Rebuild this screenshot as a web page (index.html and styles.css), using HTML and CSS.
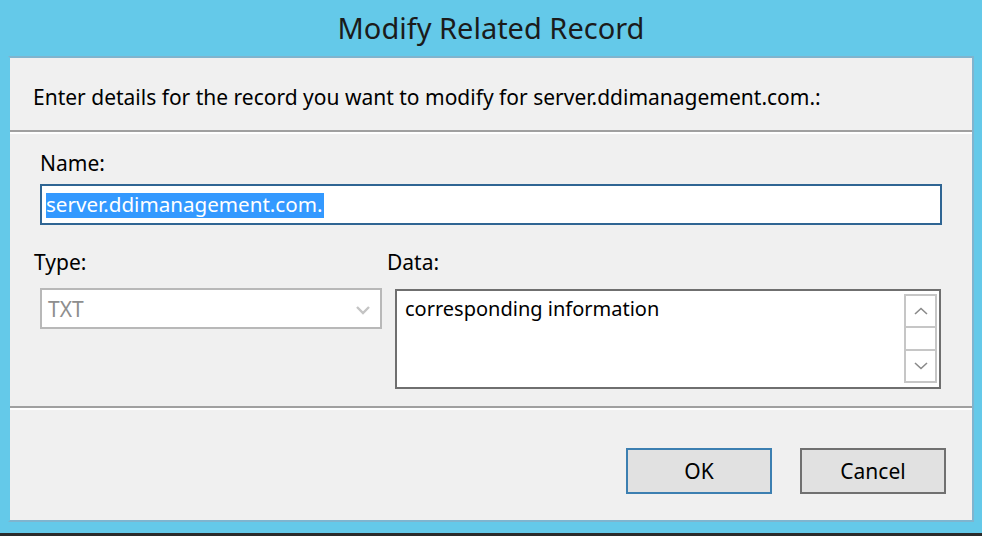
FILE: index.html
```html
<!DOCTYPE html>
<html>
<head>
<meta charset="utf-8">
<link rel="stylesheet" href="styles.css">
</head>
<body>
<div class="window">
  <div class="titlebar">Modify Related Record</div>
  <div class="client">
    <div class="intro">Enter details for the record you want to modify for server.ddimanagement.com.:</div>
    <div class="sep"></div>
    <div class="form">
      <div class="name-label">Name:</div>
      <div class="name-input"><span class="selected">server.ddimanagement.com.</span></div>
      <div class="row">
        <div class="type-col">
          <div class="type-label">Type:</div>
          <div class="combo">
            <span class="combo-text">TXT</span>
            <svg class="chev" width="14" height="10" viewBox="0 0 14 10"><path d="M1 2 L7 8 L13 2" fill="none" stroke="#c4c4c4" stroke-width="2.4"/></svg>
          </div>
        </div>
        <div class="data-col">
          <div class="data-label">Data:</div>
          <div class="databox">
            <div class="data-text">corresponding information</div>
            <div class="scroll">
              <div class="sbtn"><svg width="14" height="8" viewBox="0 0 14 8"><path d="M1 7 L7 1.5 L13 7" fill="none" stroke="#8a8a8a" stroke-width="1.6"/></svg></div>
              <div class="strack"></div>
              <div class="sbtn"><svg width="14" height="8" viewBox="0 0 14 8"><path d="M1 1 L7 6.5 L13 1" fill="none" stroke="#8a8a8a" stroke-width="1.6"/></svg></div>
            </div>
          </div>
        </div>
      </div>
    </div>
    <div class="sep"></div>
    <div class="footer">
      <button class="btn btn-default">OK</button>
      <button class="btn">Cancel</button>
    </div>
  </div>
  <div class="bottombar"></div>
</div>
</body>
</html>
```
FILE: styles.css
```css
* { box-sizing: border-box; }
html, body { margin: 0; padding: 0; }
body {
  width: 982px;
  height: 536px;
  overflow: hidden;
  font-family: "Noto Sans", "DejaVu Sans", sans-serif;
  color: #000;
}
.window {
  width: 982px;
  height: 536px;
  background: #64c9e9;
  display: flex;
  flex-direction: column;
}
.titlebar {
  height: 56px;
  display: flex;
  align-items: center;
  justify-content: center;
  font-size: 29px;
  color: #1b1b1b;
  padding-bottom: 2px;
}
.client {
  margin-left: 8px;
  width: 966px;
  height: 466px;
  border-top: 2px solid #7fb4ce;
  border-bottom: 2px solid #7fb4ce;
  border-left: 2px solid #64c9e9;
  border-right: 2px solid #7fb4ce;
  background: #f0f0f0;
  display: flex;
  flex-direction: column;
}
.intro {
  height: 72px;
  display: flex;
  align-items: center;
  padding-left: 23px;
  padding-top: 5px;
  font-size: 21px;
}
.sep {
  height: 4px;
  border-top: 2px solid #a0a0a0;
  border-bottom: 2px solid #ffffff;
}
.form {
  height: 272px;
  padding: 14px 0 0 30px;
  font-size: 21px;
}
.name-label {
  height: 36px;
  line-height: 30px;
}
.name-input {
  width: 902px;
  height: 41px;
  border: 2px solid #2f6593;
  background: #fff;
  padding: 4px 4px;
}
.selected {
  display: inline-block;
  background: #3399ff;
  color: #fff;
  height: 25px;
  line-height: 23px;
  font-size: 20.6px;
  padding: 0 2px 0 0;
}
.row {
  display: flex;
  margin-top: 22px;
}
.type-col {
  width: 353px;
  margin-left: -6px;
}
.type-label {
  height: 41px;
  line-height: 30px;
}
.combo {
  margin-left: 6px;
  width: 342px;
  height: 41px;
  border: 2px solid #b8b8b8;
  background: #fff;
  display: flex;
  align-items: center;
  justify-content: space-between;
  padding: 0 10px 0 6px;
  color: #8e8e8e;
}
.chev { margin-top: 2px; }
.data-label {
  height: 42px;
  line-height: 30px;
}
.databox {
  margin-left: 8px;
  width: 546px;
  height: 100px;
  border: 2px solid #6f6f6f;
  background: #fff;
  display: flex;
  justify-content: space-between;
  padding: 2px 2px 4px 8px;
}
.data-text {
  line-height: 32px;
  font-size: 20px;
}
.scroll {
  width: 33px;
  display: flex;
  flex-direction: column;
  border: 2px solid #c6c6c6;
  margin-top: 1px;
}
.sbtn {
  height: 30px;
  display: flex;
  align-items: center;
  justify-content: center;
}
.strack {
  flex: 1;
  border-top: 2px solid #c6c6c6;
  border-bottom: 2px solid #c6c6c6;
}
.footer {
  flex: 1;
  display: flex;
  justify-content: flex-end;
  align-items: flex-start;
  gap: 28px;
  padding: 38px 26px 0 0;
}
.btn {
  width: 146px;
  height: 46px;
  background: #e1e1e1;
  border: 2px solid #707070;
  font-family: inherit;
  font-size: 21px;
  color: #000;
  padding: 0;
}
.btn-default { border-color: #3c7fb1; }
.bottombar {
  margin-top: auto;
  height: 3px;
  background: #2b2b2b;
}
```
